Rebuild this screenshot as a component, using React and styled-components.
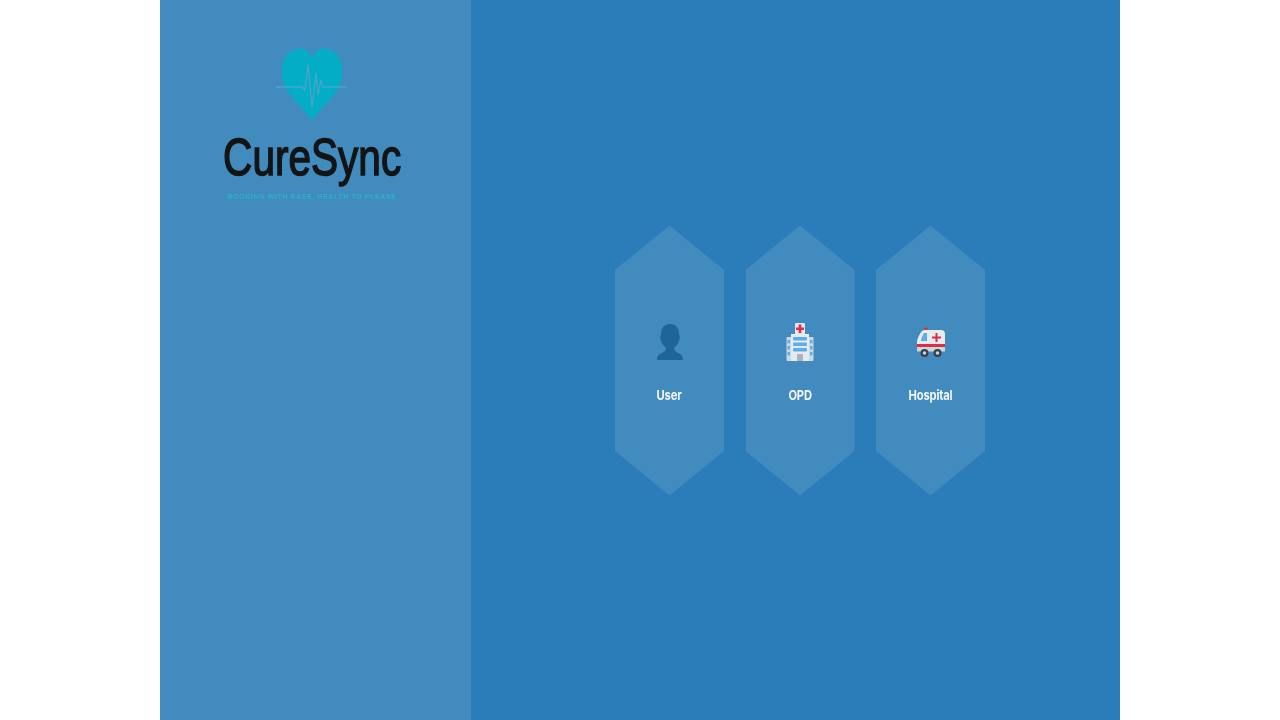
import React from "react";
import styled, { createGlobalStyle } from "styled-components";

const GlobalStyle = createGlobalStyle`
    html, body {
        margin: 0;
        padding: 0;
        height: 100%;
        background: #ffffff;
        font-family: "Inter", "Liberation Sans", sans-serif;
    }
`;

const Frame = styled.div`
    display: flex;
    width: 960px;
    height: 720px;
    margin: 0 auto;
    overflow: hidden;
    background: #2b7dba;
`;

const Sidebar = styled.aside`
    display: flex;
    flex-direction: column;
    align-items: center;
    box-sizing: border-box;
    width: 311px;
    padding: 47px 7px 0 0;
    background: #428bbf;
`;

const Logo = styled.div`
    display: flex;
    flex-direction: column;
    align-items: center;
    filter: blur(0.6px);
`;

const HeartSvg = styled.svg`
    display: block;
    width: 72px;
    height: 74px;
`;

const Brand = styled.div`
    margin-top: 6px;
    font-family: "Liberation Sans", Arial, sans-serif;
    font-size: 52px;
    line-height: 60px;
    color: #141414;
    white-space: nowrap;
    -webkit-text-stroke: 1.5px #141414;
    transform: scaleX(0.78);
`;

const Tagline = styled.div`
    margin-top: 5px;
    font-family: "Liberation Sans", Arial, sans-serif;
    font-size: 7px;
    font-weight: 700;
    line-height: 10px;
    letter-spacing: 0.62px;
    color: #2bb0c4;
    white-space: nowrap;
`;

const Main = styled.main`
    flex: 1;
    display: flex;
    justify-content: center;
    align-items: center;
    gap: 21.5px;
    padding: 1px 0 0 9px;
`;

const Hexagon = styled.a`
    display: flex;
    flex-direction: column;
    align-items: center;
    justify-content: center;
    box-sizing: border-box;
    width: 109px;
    height: 270px;
    padding-top: 4px;
    background: #428bbf;
    clip-path: polygon(50% 0, 100% 16.5%, 100% 83.5%, 50% 100%, 0 83.5%, 0 16.5%);
    cursor: pointer;
`;

const IconWrap = styled.div`
    display: flex;
    align-items: center;
    justify-content: center;
    width: 40px;
    height: 40px;
    filter: blur(0.6px);
`;

const Label = styled.span`
    display: inline-block;
    margin-top: 24px;
    font-size: 13.5px;
    font-weight: 700;
    line-height: 18px;
    letter-spacing: -0.2px;
    color: #f4f8fb;
    transform: scaleX(0.83);
    filter: blur(0.3px);
`;

const HeartMark = () => (
    <HeartSvg viewBox="0 0 72 74" aria-hidden="true">
        <path
            d="M36 73 C28 63 16 52 10 41 C3 28 4 7 20 2 C28 0 33 4 36 11 C39 4 44 0 52 2 C68 7 69 28 62 41 C56 52 44 63 36 73 Z"
            fill="#02adc5"
        />
        <path
            d="M0 40 H26 L29 43 L32 17 L36 60 L40 26 L42 48 L45 33 L47 40 H71"
            fill="none"
            stroke="#45a6c9"
            strokeWidth="1.4"
        />
    </HeartSvg>
);

const UserIcon = () => (
    <svg width="26" height="38" viewBox="0 0 26 38" aria-hidden="true">
        <path
            d="M13 1 C19 1 22 5 22 11 C23 13 23 16 22 18 C21 21 19 23 17 25 C17 27 18 28 21 30 C24 31 26 33 26 37 H0 C0 33 2 31 5 30 C8 28 9 27 9 25 C7 23 5 21 4 18 C3 16 3 13 4 11 C4 5 7 1 13 1 Z"
            fill="#1f659c"
        />
    </svg>
);

const HospitalIcon = () => (
    <svg width="28" height="40" viewBox="0 0 28 40" aria-hidden="true">
        <rect x="9" y="1" width="10" height="12" rx="1" fill="#dfe6ea" />
        <path d="M12.7 2.5 H15.3 V5.5 H18 V8 H15.3 V11 H12.7 V8 H10 V5.5 H12.7 Z" fill="#dd2e44" />
        <rect x="0.5" y="15" width="27" height="24" rx="1" fill="#ccd6dd" />
        <rect x="5" y="12" width="18" height="27" fill="#e4eaee" />
        <g fill="#5dadec">
            <rect x="7" y="15" width="14" height="3.4" rx="1" />
            <rect x="7" y="20.5" width="14" height="3.4" rx="1" />
            <rect x="7" y="26" width="14" height="3.4" rx="1" />
            <rect x="1.5" y="18" width="2.5" height="3.4" />
            <rect x="1.5" y="24" width="2.5" height="3.4" />
            <rect x="1.5" y="30" width="2.5" height="3.4" />
            <rect x="24" y="18" width="2.5" height="3.4" />
            <rect x="24" y="24" width="2.5" height="3.4" />
            <rect x="24" y="30" width="2.5" height="3.4" />
        </g>
        <rect x="11" y="32" width="6" height="7" fill="#aab6be" />
    </svg>
);

const AmbulanceIcon = () => (
    <svg width="28" height="32" viewBox="0 -1 28 32" aria-hidden="true">
        <rect x="7" y="0.5" width="3.5" height="3.5" rx="1" fill="#dd2e44" />
        <path d="M7 3 H24 C27 3 28 5 28 7 V24 H0 V15 C0 12 4 3 7 3 Z" fill="#e8ecef" />
        <path d="M7 6 H10 V14 H4 C4 12 6 7 7 6 Z" fill="#5dadec" />
        <path d="M18.5 6 H20.5 V9.5 H24 V11.5 H20.5 V15 H18.5 V11.5 H15 V9.5 H18.5 Z" fill="#dd2e44" />
        <rect x="0" y="17" width="28" height="3.2" fill="#dd2e44" />
        <rect x="0" y="20" width="28" height="4.5" fill="#ccd6dd" />
        <circle cx="7.5" cy="26" r="4" fill="#3a4146" />
        <circle cx="7.5" cy="26" r="1.8" fill="#ccd6dd" />
        <circle cx="20.5" cy="26" r="4" fill="#3a4146" />
        <circle cx="20.5" cy="26" r="1.8" fill="#ccd6dd" />
    </svg>
);

const portals = [
    { name: "User", Icon: UserIcon },
    { name: "OPD", Icon: HospitalIcon },
    { name: "Hospital", Icon: AmbulanceIcon },
];

const App = () => {
    return (
        <>
            <GlobalStyle />
            <Frame>
                <Sidebar>
                    <Logo>
                        <HeartMark />
                        <Brand>CureSync</Brand>
                        <Tagline>BOOKING WITH EASE, HEALTH TO PLEASE</Tagline>
                    </Logo>
                </Sidebar>
                <Main>
                    {portals.map(({ name, Icon }) => (
                        <Hexagon key={name}>
                            <IconWrap>
                                <Icon />
                            </IconWrap>
                            <Label>{name}</Label>
                        </Hexagon>
                    ))}
                </Main>
            </Frame>
        </>
    );
};

export default App;
